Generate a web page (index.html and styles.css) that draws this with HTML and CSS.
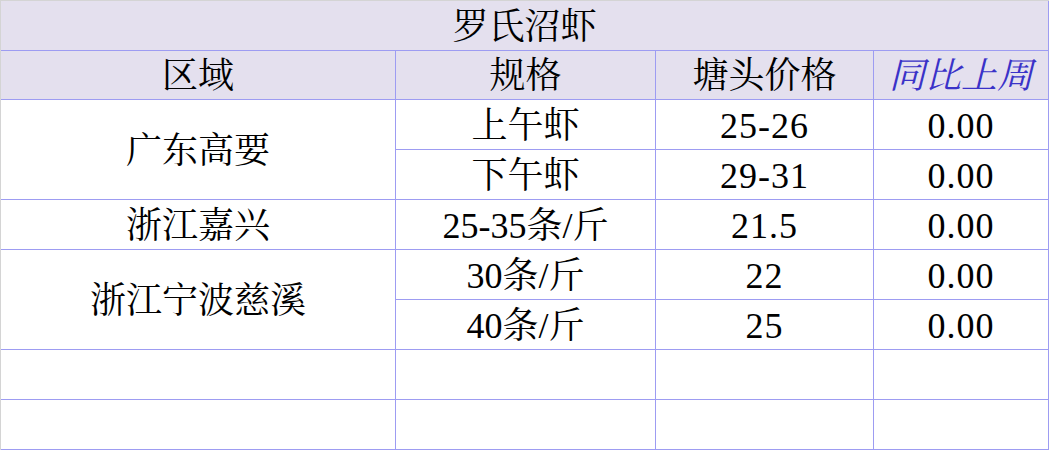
FILE: index.html
```html
<!DOCTYPE html>
<html lang="zh-CN">
<head>
<meta charset="utf-8">
<title>罗氏沼虾</title>
<link rel="stylesheet" href="styles.css">
</head>
<body>
<div class="sheet">
  <div class="cell title">罗氏沼虾</div>
  <div class="cell head">区域</div>
  <div class="cell head">规格</div>
  <div class="cell head">塘头价格</div>
  <div class="cell head accent">同比上周</div>

  <div class="cell span2">广东高要</div>
  <div class="cell">上午虾</div>
  <div class="cell num">25-26</div>
  <div class="cell num">0.00</div>
  <div class="cell">下午虾</div>
  <div class="cell num">29-31</div>
  <div class="cell num">0.00</div>

  <div class="cell">浙江嘉兴</div>
  <div class="cell">25-35条/斤</div>
  <div class="cell num">21.5</div>
  <div class="cell num">0.00</div>

  <div class="cell span2">浙江宁波慈溪</div>
  <div class="cell">30条/斤</div>
  <div class="cell num">22</div>
  <div class="cell num">0.00</div>
  <div class="cell">40条/斤</div>
  <div class="cell num">25</div>
  <div class="cell num">0.00</div>

  <div class="cell"></div>
  <div class="cell"></div>
  <div class="cell"></div>
  <div class="cell"></div>
  <div class="cell"></div>
  <div class="cell"></div>
  <div class="cell"></div>
  <div class="cell"></div>
</div>
</body>
</html>
```
FILE: styles.css
```css
html, body {
  margin: 0;
  padding: 0;
  background: #ffffff;
}

.sheet {
  display: grid;
  grid-template-columns: 395px 260px 218px 175px;
  grid-template-rows: 50px 49px repeat(7, 50px);
  width: 1048px;
  height: 449px;
  border-top: 1px solid #d4d4d4;
  border-left: 1px solid #d4d4d4;
  font-family: "Liberation Serif", "Noto Serif CJK SC", "Noto Sans CJK SC", serif;
  font-size: 36px;
  color: #000000;
}

.cell {
  box-sizing: border-box;
  display: flex;
  align-items: center;
  justify-content: center;
  border-right: 1px solid #9d9cf2;
  border-bottom: 1px solid #9d9cf2;
  white-space: nowrap;
  line-height: 1;
  padding-top: 2px;
}

.title {
  grid-column: 1 / -1;
  background: #e4e0ee;
}

.head {
  background: #e4e0ee;
}

.accent {
  color: #3a32c8;
  font-style: italic;
}

.span2 {
  grid-row: span 2;
}

.num {
  letter-spacing: 1px;
}
```
